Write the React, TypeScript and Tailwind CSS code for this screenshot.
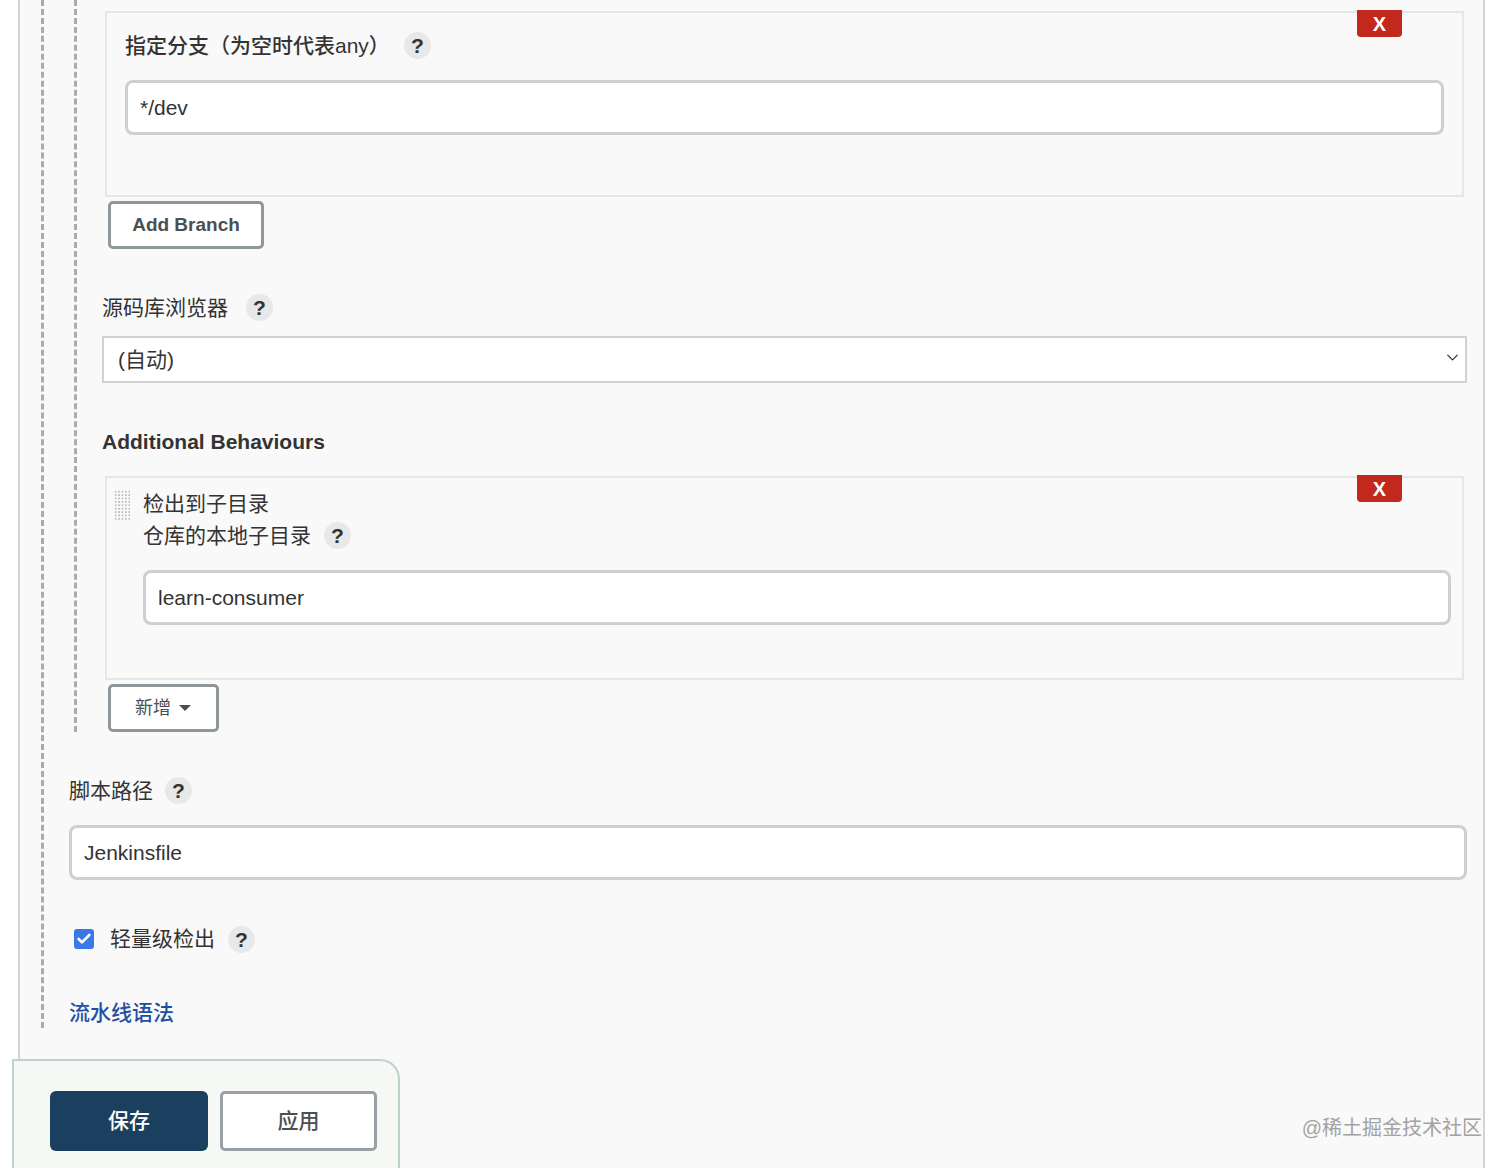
import React from "react";
import { ChevronDown, Check } from "lucide-react";

function Help({ className = "" }: { className?: string }) {
  return (
    <span className={"flex h-[27px] w-[27px] shrink-0 items-center justify-center rounded-full bg-[#e8e8e8] text-[21px] font-bold leading-none text-[#333] " + className}>
      ?
    </span>
  );
}

function Remove() {
  return (
    <span className="absolute right-[60px] top-[-3px] flex h-[27px] w-[45px] items-center justify-center rounded-b-[4px] bg-[#c3281c] text-[20px] font-bold leading-none text-white">
      X
    </span>
  );
}

function TextBox({ value, className = "" }: { value: string; className?: string }) {
  return (
    <input
      readOnly
      defaultValue={value}
      className={"block h-[55px] rounded-[8px] border-[3px] border-[#cdd0d2] bg-white px-[12px] text-[21px] text-[#333] outline-none " + className}
    />
  );
}

export default function App() {
  return (
    <div className="relative h-[1168px] w-full overflow-hidden bg-white font-['Liberation_Sans','Noto_Sans_CJK_SC',sans-serif] text-[21px] text-[#333]">
      <div className="ml-[18px] h-[1168px] w-[1467px] border-x-2 border-[#d4d4d4] bg-[#f9f9f9]">
        <div className="ml-[21px] mr-[16px] h-[1028px] border-l-[3px] border-dashed border-[#ababab] pl-[25px]">
          <div className="ml-[5px] h-[732px] border-l-[3px] border-dashed border-[#ababab] pl-[25px] pt-[11px]">
            {/* branch block */}
            <div className="relative mx-[3px] h-[186px] border-2 border-[#e6e6e6] pl-[18px] pr-[18px] pt-[19px]">
              <Remove />
              <div className="flex h-[27px] items-center">
                <span className="font-medium">指定分支（为空时代表any）</span>
                <Help className="ml-[14px]" />
              </div>
              <TextBox value="*/dev" className="mt-[21px] w-full" />
            </div>
            <button className="ml-[6px] mt-[4px] block h-[48px] w-[156px] rounded-[5px] border-[3px] border-[#8f979b] bg-white text-[19px] font-bold text-[#4a4f53]">
              Add Branch
            </button>

            <div className="mt-[45px] flex h-[27px] items-center">
              <span>源码库浏览器</span>
              <Help className="ml-[18px]" />
            </div>
            <div className="relative mt-[15px] flex h-[47px] items-center border-2 border-[#d0d3d4] bg-white pl-[14px]">
              <span>(自动)</span>
              <ChevronDown className="absolute right-[3px] top-[10px] h-[19px] w-[19px] text-[#333]" strokeWidth={1.6} />
            </div>

            <div className="mt-[45px] flex h-[28px] items-center font-bold">Additional Behaviours</div>

            {/* behaviour block */}
            <div className="relative mx-[3px] mt-[20px] flex h-[204px] gap-[12px] border-2 border-[#e6e6e6] pl-[7px] pr-[11px] pt-[12px]">
              <Remove />
              <div className="h-[30px] w-[17px] shrink-0 bg-[radial-gradient(circle,#bdbdbd_1px,transparent_1.3px)] bg-[length:3.4px_3.4px]" />
              <div className="flex-1">
                <div className="flex h-[28px] items-center">检出到子目录</div>
                <div className="mt-[4px] flex h-[27px] items-center">
                  <span>仓库的本地子目录</span>
                  <Help className="ml-[13px]" />
                </div>
                <TextBox value="learn-consumer" className="mt-[21px] w-full" />
              </div>
            </div>
            <button className="ml-[6px] mt-[4px] flex h-[48px] w-[111px] items-center rounded-[5px] border-[3px] border-[#8f979b] bg-white pl-[24px] text-[18px] text-[#4a4f53]">
              <span>新增</span>
              <svg className="ml-[8px]" width="12" height="6" viewBox="0 0 12 6">
                <path d="M0 0h12L6 6z" fill="#4a4f53" />
              </svg>
            </button>
          </div>

          <div className="mt-[45px] flex h-[27px] items-center">
            <span>脚本路径</span>
            <Help className="ml-[12px]" />
          </div>
          <TextBox value="Jenkinsfile" className="mt-[21px] w-full" />

          <div className="mt-[45px] flex h-[28px] items-center pl-[5px]">
            <span className="flex h-[20px] w-[20px] items-center justify-center rounded-[3px] bg-[#3b78e7]">
              <Check className="h-[16px] w-[16px] text-white" strokeWidth={4} />
            </span>
            <span className="ml-[16px]">轻量级检出</span>
            <Help className="ml-[13px]" />
          </div>

          <a className="mt-[46px] flex h-[28px] items-center font-medium text-[#1f4fa3]">流水线语法</a>
        </div>
      </div>

      {/* sticky action bar */}
      <div className="absolute bottom-0 left-[12px] flex h-[109px] w-[388px] items-start gap-[12px] rounded-tr-[20px] border-x-2 border-t-2 border-[#bcd2cb] bg-[#f6f8f5] pl-[36px] pt-[30px]">
        <button className="h-[60px] w-[158px] rounded-[6px] bg-[#1b3f5f] text-[21px] font-medium text-white">保存</button>
        <button className="h-[60px] w-[157px] rounded-[5px] border-[3px] border-[#9aa1a6] bg-white text-[21px] font-medium text-[#4a4f53]">应用</button>
      </div>

      <div className="absolute bottom-[26px] right-[30px] text-[20px] leading-[28px] text-[#a3a3a3]">@稀土掘金技术社区</div>
    </div>
  );
}
